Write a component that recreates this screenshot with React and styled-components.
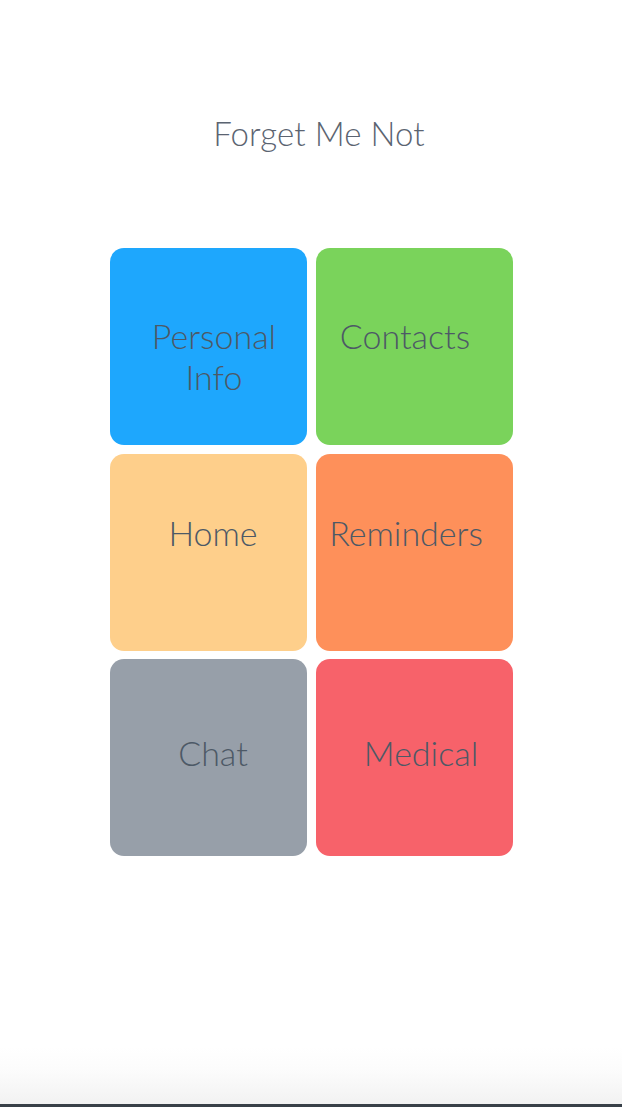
import React from 'react';
import styled, { createGlobalStyle } from 'styled-components';

const GlobalStyle = createGlobalStyle`
  html, body {
    margin: 0;
    padding: 0;
    background: #fff;
  }
  body {
    font-family: Lato, "Open Sans", sans-serif;
  }
`;

const Page = styled.div`
  display: flex;
  flex-direction: column;
  align-items: center;
  min-height: 100vh;
  box-sizing: border-box;
`;

const Title = styled.h1`
  margin: 111px 0 0;
  padding-left: 16px;
  font-family: Lato, sans-serif;
  font-weight: 300;
  font-size: 33px;
  line-height: 44px;
  color: #5b6471;
  letter-spacing: 0.1px;
`;

const Grid = styled.div`
  display: grid;
  grid-template-columns: repeat(2, 197px);
  grid-auto-rows: 197px;
  column-gap: 9px;
  row-gap: 8.5px;
  margin-top: 93px;
`;

const Tile = styled.button`
  display: flex;
  flex-direction: column;
  align-items: center;
  justify-content: flex-start;
  box-sizing: border-box;
  padding: ${p => p.$top}px 0 0;
  border: none;
  border-radius: 14px;
  background: ${p => p.$color};
  cursor: pointer;
`;

const Label = styled.span`
  font-family: Lato, sans-serif;
  font-weight: 300;
  font-size: 34px;
  line-height: 41px;
  color: #4d5966;
  text-align: center;
  white-space: nowrap;
  transform: translateX(${p => p.$dx}px);
`;

const Footer = styled.div`
  margin-top: auto;
  align-self: stretch;
  height: 57px;
  background: linear-gradient(to bottom, #ffffff 0%, #fcfcfc 40%, #f2f2f2 100%);
  border-bottom: 3px solid #384048;
`;

const tiles = [
  { name: 'personal', lines: ['Personal', 'Info'], color: '#1ea7fd', top: 67, dx: 6 },
  { name: 'contacts', lines: ['Contacts'], color: '#7ad35b', top: 67, dx: -9 },
  { name: 'home', lines: ['Home'], color: '#fecf8b', top: 58, dx: 5 },
  { name: 'reminders', lines: ['Reminders'], color: '#fe905a', top: 58, dx: -8 },
  { name: 'chat', lines: ['Chat'], color: '#979fa9', top: 73, dx: 5 },
  { name: 'medical', lines: ['Medical'], color: '#f7626a', top: 73, dx: 7 },
];

export default function App() {
  return (
    <Page>
      <GlobalStyle />
      <Title>Forget Me Not</Title>
      <Grid>
        {tiles.map(tile => (
          <Tile key={tile.name} $color={tile.color} $top={tile.top}>
            {tile.lines.map(line => (
              <Label key={line} $dx={tile.dx}>
                {line}
              </Label>
            ))}
          </Tile>
        ))}
      </Grid>
      <Footer />
    </Page>
  );
}
